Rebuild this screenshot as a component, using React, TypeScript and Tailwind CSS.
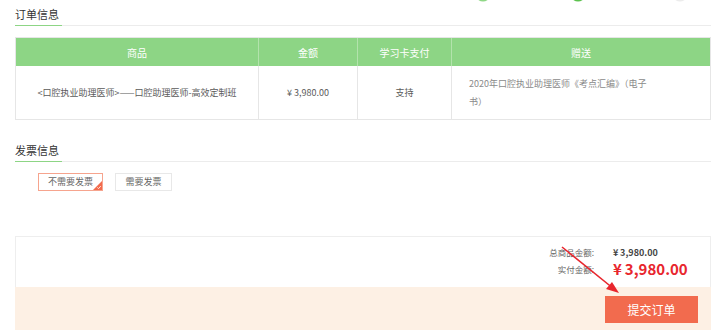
import React from "react";

const font = { fontFamily: "'Noto Sans CJK SC', 'Noto Sans', sans-serif" };

function SectionTitle({ title }: { title: string }) {
  return (
    <div className="border-b border-[#ececec]">
      <span className="-mb-px inline-block w-[47px] border-b border-[#8dd585] pt-[6px] pb-[3px] text-[11px] leading-[16px] text-[#333]">
        {title}
      </span>
    </div>
  );
}

export default function App() {
  return (
    <div className="relative h-[330px] w-[719px] overflow-hidden bg-white" style={font}>
      {/* step bar remains (cut off at top) */}
      <svg className="absolute left-0 top-0" width="719" height="6">
        <ellipse cx="483" cy="-3" rx="6" ry="4.5" fill="#8fd786" />
        <ellipse cx="578" cy="-3" rx="6" ry="4.5" fill="#5cc24e" />
        <ellipse cx="680" cy="-3" rx="6" ry="4.5" fill="#ececec" />
      </svg>

      <div className="pl-[15px] pr-[8px]">
        <SectionTitle title="订单信息" />

        <div className="mt-[11px] border border-[#e6e6e6]">
          <div className="grid h-[28px] grid-cols-[243px_99px_94px_1fr] bg-[#8dd585] text-[10px] text-white">
            <div className="flex items-center justify-center border-r border-[#b3e3ac]">商品</div>
            <div className="flex items-center justify-center border-r border-[#b3e3ac]">金额</div>
            <div className="flex items-center justify-center border-r border-[#b3e3ac]">学习卡支付</div>
            <div className="flex items-center justify-center">赠送</div>
          </div>
          <div className="grid h-[53px] grid-cols-[243px_99px_94px_1fr] text-[9px] text-[#5a5a5a]">
            <div className="flex items-center justify-center border-r border-[#e6e6e6]">
              &lt;口腔执业助理医师&gt;——口腔助理医师-高效定制班
            </div>
            <div className="flex items-center justify-center border-r border-[#e6e6e6]">¥&thinsp;3,980.00</div>
            <div className="flex items-center justify-center border-r border-[#e6e6e6]">支持</div>
            <div className="flex items-center pl-[17px]">
              <p className="w-[186px] leading-[18px] text-[#8a8a8a]">2020年口腔执业助理医师《考点汇编》（电子书）</p>
            </div>
          </div>
        </div>

        <div className="mt-[16px]">
          <SectionTitle title="发票信息" />
        </div>

        <div className="mt-[11px] flex gap-[12px] pl-[23px] text-[9px] text-[#666]">
          <div className="relative flex h-[18px] w-[65px] items-center justify-center border border-[#f6a48e]">
            不需要发票
            <svg className="absolute bottom-0 right-0" width="9" height="9" viewBox="0 0 9 9">
              <polygon points="9,0 9,9 0,9" fill="#f26b4e" />
              <path d="M4.3 6.4 L5.6 7.6 L7.8 5" stroke="#fff" strokeWidth="0.8" fill="none" />
            </svg>
          </div>
          <div className="flex h-[18px] w-[57px] items-center justify-center border border-[#e8e8e8]">
            需要发票
          </div>
        </div>

        <div className="mt-[45px]">
          <div className="flex h-[51px] flex-col justify-center gap-[1px] border border-b-0 border-[#eeeeee] pr-[25px]">
            <div className="flex items-center justify-end">
              <span className="text-[8.5px] text-[#666]">总商品金额:</span>
              <span className="ml-[19px] w-[72px] whitespace-nowrap text-[9px] font-bold text-[#444]">¥&thinsp;3,980.00</span>
            </div>
            <div className="flex items-center justify-end">
              <span className="text-[8.5px] text-[#666]">实付金额:</span>
              <span className="ml-[19px] w-[72px] whitespace-nowrap text-[15px] font-bold leading-[18px] text-[#e8262d]">¥&thinsp;3,980.00</span>
            </div>
          </div>
          <div className="flex h-[50px] justify-end bg-[#fdf0e4] pr-[13px] pt-[9px]">
            <button className="h-[27px] w-[93px] bg-[#f26b4e] text-[12px] text-white">提交订单</button>
          </div>
        </div>
      </div>

      {/* annotation arrow */}
      <svg className="pointer-events-none absolute left-0 top-0" width="719" height="330">
        <line x1="562" y1="247" x2="614" y2="289" stroke="#e8262d" strokeWidth="1.6" />
        <polygon points="619,293 606,289 612,282" fill="#e8262d" />
      </svg>
    </div>
  );
}
